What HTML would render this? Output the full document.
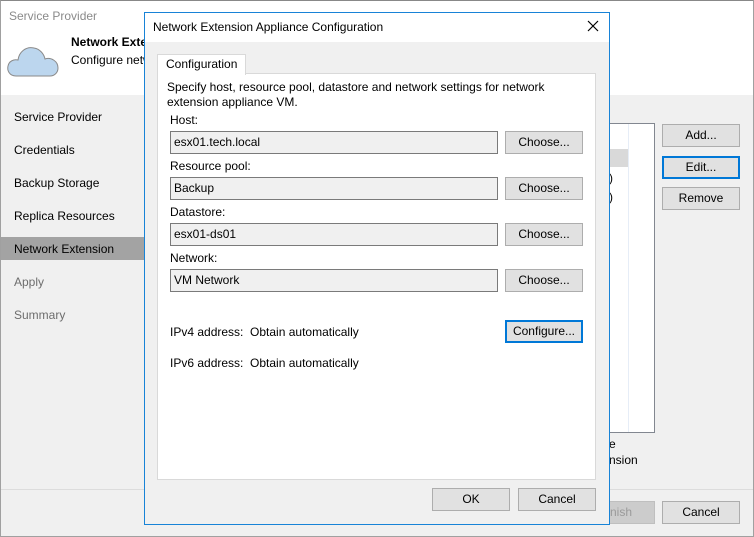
<!DOCTYPE html>
<html><head><meta charset="utf-8"><style>
*{box-sizing:border-box;margin:0;padding:0}
body{width:754px;height:537px;position:relative;overflow:hidden;font-family:"Liberation Sans",sans-serif;font-size:12px;color:#000;background:#f0f0f0}
.a{position:absolute}
.btn{position:absolute;background:#e1e1e1;border:1px solid #adadad;text-align:center;line-height:20px;font-size:12px}
.btn.f{border:2px solid #0078d7;line-height:18px}
.tb{position:absolute;background:#f0f0f0;border:1px solid #7a7a7a;padding-left:3px;line-height:20px;color:#000}
.nav{position:absolute;left:14px}
</style></head><body>
<div class="a" style="left:0;top:0;width:754px;height:537px;border:1px solid #a0a0a0;border-top-color:#888"></div>
<div class="a" style="left:1px;top:1px;width:752px;height:94px;background:#fff"></div>
<div class="a" style="left:9px;top:9px;color:#8a8a8a">Service Provider</div>
<div class="a" style="left:71px;top:35px;font-weight:bold">Network Extension</div>
<div class="a" style="left:71px;top:53px">Configure network</div>
<svg class="a" style="left:6px;top:40px" width="54" height="38" viewBox="0 0 54 38"><path d="M10 36 C3 36 1 30 2 26 C3 21 8 19 12 20 C13 12 20 6 28 8 C34 9 38 14 39 19 C45 17 52 21 52 28 C52 33 48 36 44 36 Z" fill="#bcd6ee" stroke="#8a8a8a" stroke-width="1"/></svg>
<div class="a" style="left:1px;top:95px;width:144px;height:394px;background:#f0f0f0"></div>
<div class="nav" style="top:110px">Service Provider</div>
<div class="nav" style="top:143px">Credentials</div>
<div class="nav" style="top:176px">Backup Storage</div>
<div class="nav" style="top:209px">Replica Resources</div>
<div class="a" style="left:1px;top:237px;width:144px;height:23px;background:#a3a3a3"></div>
<div class="nav" style="top:242px">Network Extension</div>
<div class="nav" style="top:275px;color:#6d6d6d">Apply</div>
<div class="nav" style="top:308px;color:#6d6d6d">Summary</div>
<div class="a" style="left:609px;top:123px;width:46px;height:310px;background:#fff;border:1px solid #828790"></div>
<div class="a" style="left:628px;top:124px;width:1px;height:308px;background:#e6edf7"></div>
<div class="a" style="left:610px;top:149px;width:18px;height:18px;background:#d9d9d9"></div>
<div class="a" style="left:609px;top:171px">)</div>
<div class="a" style="left:609px;top:190px">)</div>
<div class="a" style="left:609px;top:437px">e</div>
<div class="a" style="left:609px;top:453px">nsion</div>
<div class="btn" style="left:662px;top:124px;width:78px;height:23px">Add...</div>
<div class="btn f" style="left:662px;top:156px;width:78px;height:23px">Edit...</div>
<div class="btn" style="left:662px;top:187px;width:78px;height:23px">Remove</div>
<div class="a" style="left:1px;top:489px;width:752px;height:1px;background:#dcdcdc"></div>
<div class="btn" style="left:600px;top:501px;width:55px;height:23px;background:#ccc;border-color:#bfbfbf;color:#9a9a9a;text-align:left;padding-left:9px">nish</div>
<div class="btn" style="left:662px;top:501px;width:78px;height:23px">Cancel</div>

<div class="a" style="left:144px;top:12px;width:466px;height:513px;background:#f0f0f0;border:1px solid #1883d7"></div>
<div class="a" style="left:145px;top:13px;width:464px;height:29px;background:#fff"></div>
<div class="a" style="left:153px;top:20px">Network Extension Appliance Configuration</div>
<svg class="a" style="left:587px;top:20px" width="12" height="12"><path d="M1 1L11 11M11 1L1 11" stroke="#000" stroke-width="1.2"/></svg>
<div class="a" style="left:157px;top:73px;width:439px;height:407px;background:#fff;border:1px solid #d9d9d9"></div>
<div class="a" style="left:157px;top:54px;width:89px;height:21px;background:#fff;border:1px solid #d9d9d9;border-bottom:none"></div>
<div class="a" style="left:166px;top:57px">Configuration</div>
<div class="a" style="left:167px;top:80px;line-height:15px">Specify host, resource pool, datastore and network settings for network<br>extension appliance VM.</div>
<div class="a" style="left:170px;top:113px">Host:</div>
<div class="tb" style="left:170px;top:131px;width:328px;height:23px">esx01.tech.local</div>
<div class="btn" style="left:505px;top:131px;width:78px;height:23px">Choose...</div>
<div class="a" style="left:170px;top:159px">Resource pool:</div>
<div class="tb" style="left:170px;top:177px;width:328px;height:23px">Backup</div>
<div class="btn" style="left:505px;top:177px;width:78px;height:23px">Choose...</div>
<div class="a" style="left:170px;top:205px">Datastore:</div>
<div class="tb" style="left:170px;top:223px;width:328px;height:23px">esx01-ds01</div>
<div class="btn" style="left:505px;top:223px;width:78px;height:23px">Choose...</div>
<div class="a" style="left:170px;top:251px">Network:</div>
<div class="tb" style="left:170px;top:269px;width:328px;height:23px">VM Network</div>
<div class="btn" style="left:505px;top:269px;width:78px;height:23px">Choose...</div>
<div class="a" style="left:170px;top:325px">IPv4 address:&nbsp; Obtain automatically</div>
<div class="btn f" style="left:505px;top:320px;width:78px;height:23px">Configure...</div>
<div class="a" style="left:170px;top:356px">IPv6 address:&nbsp; Obtain automatically</div>
<div class="btn" style="left:432px;top:488px;width:78px;height:23px">OK</div>
<div class="btn" style="left:518px;top:488px;width:78px;height:23px">Cancel</div>
</body></html>
